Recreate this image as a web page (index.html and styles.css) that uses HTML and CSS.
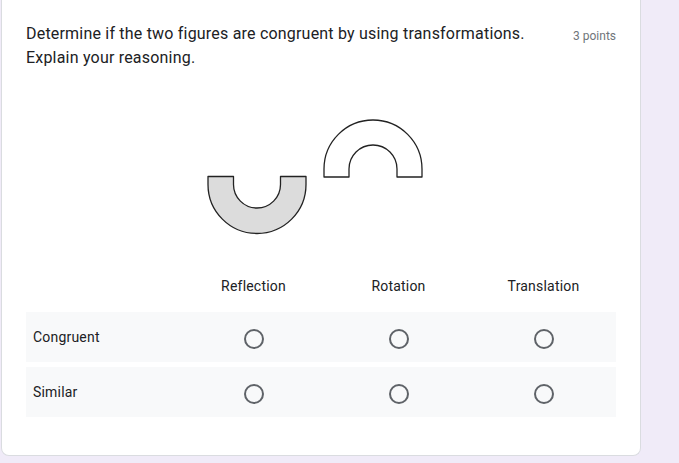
FILE: index.html
```html
<!DOCTYPE html>
<html>
<head>
<meta charset="utf-8">
<link rel="stylesheet" href="styles.css">
</head>
<body>
<div class="card">
  <div class="head">
    <div class="title">Determine if the two figures are congruent by using transformations. Explain your reasoning.</div>
    <div class="points">3 points</div>
  </div>
  <svg class="figure" width="590" height="150" viewBox="0 0 590 150">
    <path d="M182 76.5 L182 84.5 A49 49 0 0 0 280 84.5 L280 76.5 L254.5 76.5 L254.5 84.5 A23.5 23.5 0 0 1 207.5 84.5 L207.5 76.5 Z" fill="#dcdcdc" stroke="#222" stroke-width="1.3" stroke-linejoin="round"/>
    <path d="M298 77 L298 69 A49 49 0 0 1 396 69 L396 77 L371 77 L371 69 A24 24 0 0 0 323 69 L323 77 Z" fill="#fff" stroke="#222" stroke-width="1.3" stroke-linejoin="round"/>
  </svg>
  <div class="grid">
    <div class="hrow">
      <div class="lab"></div>
      <div class="col">Reflection</div>
      <div class="col">Rotation</div>
      <div class="col">Translation</div>
    </div>
    <div class="row">
      <div class="lab">Congruent</div>
      <div class="col"><span class="radio"></span></div>
      <div class="col"><span class="radio"></span></div>
      <div class="col"><span class="radio"></span></div>
    </div>
    <div class="row">
      <div class="lab">Similar</div>
      <div class="col"><span class="radio"></span></div>
      <div class="col"><span class="radio"></span></div>
      <div class="col"><span class="radio"></span></div>
    </div>
  </div>
</div>
</body>
</html>
```
FILE: styles.css
```css
html, body {
  margin: 0;
  padding: 0;
  background: #f0ebf8;
  font-family: Roboto, "Liberation Sans", Arial, sans-serif;
  color: #202124;
}
.card {
  box-sizing: border-box;
  width: 640px;
  margin-left: 1px;
  background: #fff;
  border: 1px solid #dadce0;
  border-top: none;
  border-radius: 0 0 8px 8px;
  padding: 22px 24px 38px 24px;
}
.head {
  display: flex;
  align-items: flex-start;
  gap: 24px;
}
.title {
  flex: 1;
  font-size: 16px;
  line-height: 24px;
  letter-spacing: 0.2px;
}
.points {
  font-size: 12px;
  line-height: 16px;
  color: #70757a;
  margin-top: 6px;
  white-space: nowrap;
}
.figure {
  display: block;
  margin-top: 30px;
}
.grid {
  display: flex;
  flex-direction: column;
  gap: 5px;
  margin-top: 12px;
}
.hrow, .row {
  display: grid;
  grid-template-columns: 155px 145px 145px 145px;
  align-items: center;
}
.hrow {
  box-sizing: border-box;
  height: 45px;
  padding-top: 2px;
  font-size: 14px;
  letter-spacing: 0.2px;
}
.row {
  height: 50px;
  background: #f8f9fa;
  font-size: 14px;
  letter-spacing: 0.2px;
}
.lab {
  padding-left: 7px;
}
.col {
  display: flex;
  justify-content: center;
}
.row .col {
  padding-top: 4px;
}
.radio {
  box-sizing: border-box;
  width: 20px;
  height: 20px;
  border: 2px solid #5f6368;
  border-radius: 50%;
}
```
